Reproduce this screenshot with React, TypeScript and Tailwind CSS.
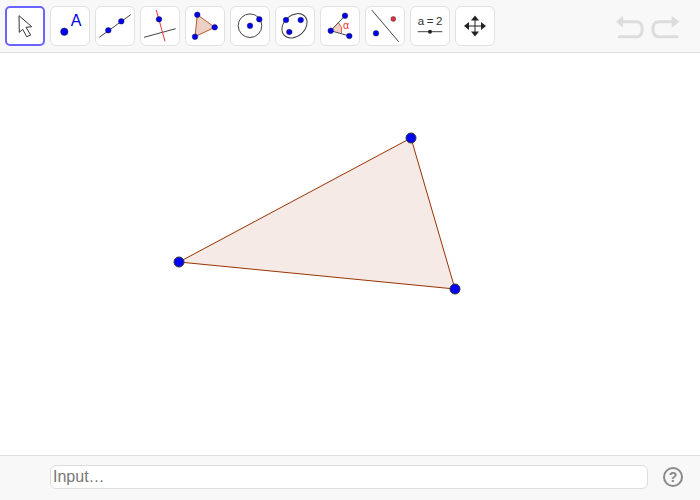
import React from "react";

const BLUE = "#0000f0";
const Dot = ({ x, y, r = 2.8, c = BLUE }: { x: number; y: number; r?: number; c?: string }) => (
  <circle cx={x} cy={y} r={r} fill={c} stroke="#222244" strokeWidth={0.5} />
);

const Tool = ({ active, label, children }: { active?: boolean; label: string; children: React.ReactNode }) => (
  <button
    aria-label={label}
    className={
      active
        ? "w-10 h-10 shrink-0 flex items-center justify-center rounded-[5px] bg-white border-2 border-[#6b63ff]"
        : "w-10 h-10 shrink-0 flex items-center justify-center rounded-[6px] bg-white border border-[#e2e2e2]"
    }
  >
    <svg width="40" height="40" viewBox="0 0 40 40" className="shrink-0">
      {children}
    </svg>
  </button>
);

const LINE = "#444444";

export default function App() {
  return (
    <div className="w-[700px] h-[500px] flex flex-col bg-white overflow-hidden font-['Liberation_Sans',Arial,sans-serif]">
      <div className="h-[53px] shrink-0 flex items-start pt-[6px] pl-[5px] gap-[5px] bg-[#f8f8f8] border-b border-[#dfdfdf]">
        <Tool active label="Move">
          <polygon
            points="14,9.7 26.7,20.7 21,21.3 25.7,29 21.7,30.7 17.7,23.3 14.3,26.3"
            fill="#ffffff"
            stroke="#333333"
            strokeWidth="1"
            strokeLinejoin="round"
          />
        </Tool>
        <Tool label="Point">
          <Dot x={14.3} y={25.7} r={3.7} />
          <text x="26" y="20" textAnchor="middle" fontSize="16" fill="#0000e6" fontFamily="Liberation Sans, sans-serif">A</text>
        </Tool>
        <Tool label="Line">
          <line x1="4.3" y1="31.3" x2="35.7" y2="8.7" stroke={LINE} strokeWidth="1" />
          <Dot x={13.3} y={24.3} />
          <Dot x={26.3} y={15.3} />
        </Tool>
        <Tool label="Perpendicular">
          <line x1="4" y1="31.3" x2="35.7" y2="22.7" stroke={LINE} strokeWidth="1" />
          <line x1="16.3" y1="4" x2="25" y2="35.3" stroke="#f03030" strokeWidth="1" />
          <Dot x={19} y={13.3} />
        </Tool>
        <Tool label="Polygon">
          <polygon points="12.3,8.7 29.7,21.3 10,30.7" fill="#ebd0c5" stroke="#b5582f" strokeWidth="1" />
          <Dot x={12.3} y={8.7} />
          <Dot x={29.7} y={21.3} />
          <Dot x={10} y={30.7} />
        </Tool>
        <Tool label="Circle">
          <circle cx="20" cy="19.7" r="11.8" fill="none" stroke={LINE} strokeWidth="1" />
          <Dot x={20} y={19.7} />
          <Dot x={29.3} y={13.3} />
        </Tool>
        <Tool label="Conic">
          <ellipse cx="19.5" cy="19.8" rx="14" ry="10.5" transform="rotate(-42 19.5 19.8)" fill="none" stroke={LINE} strokeWidth="1" />
          <Dot x={11} y={14} />
          <Dot x={25.7} y={14} />
          <Dot x={14.3} y={26} />
        </Tool>
        <Tool label="Angle">
          <path d="M10.7 24.7 L18.4 16.6 A11 11 0 0 1 21.5 27 Z" fill="#f3cfc6" stroke="none" />
          <path d="M18.4 16.6 A11 11 0 0 1 21.5 27" fill="none" stroke="#c04a2a" strokeWidth="0.8" />
          <line x1="10.7" y1="24.7" x2="25" y2="9.7" stroke={LINE} strokeWidth="1" />
          <line x1="10.7" y1="24.7" x2="29.3" y2="30" stroke={LINE} strokeWidth="1" />
          <Dot x={10.7} y={24.7} />
          <Dot x={25} y={9.7} />
          <Dot x={29.3} y={30} />
          <text x="26" y="23" textAnchor="middle" fontSize="10.5" fill="#ff3030" fontFamily="Liberation Sans, sans-serif">α</text>
        </Tool>
        <Tool label="Reflect">
          <line x1="6.7" y1="4" x2="33.7" y2="35.7" stroke={LINE} strokeWidth="1" />
          <Dot x={11} y={27.3} />
          <Dot x={28.3} y={13} c="#e83030" r={2.4} />
        </Tool>
        <Tool label="Slider">
          <text x="20" y="19" textAnchor="middle" fontSize="11.5" letterSpacing="-0.3" fill="#333333" fontFamily="Liberation Sans, sans-serif">a = 2</text>
          <line x1="7.7" y1="25.7" x2="32.3" y2="25.7" stroke={LINE} strokeWidth="1" />
          <circle cx="20" cy="25.7" r="2" fill="#222222" />
        </Tool>
        <Tool label="Move view">
          <line x1="20" y1="11" x2="20" y2="29" stroke="#222222" strokeWidth="1" />
          <line x1="11" y1="20" x2="29" y2="20" stroke="#222222" strokeWidth="1" />
          <polygon points="20,9.5 16,14.5 24,14.5" fill="#222222" />
          <polygon points="20,30.5 16,25.5 24,25.5" fill="#222222" />
          <polygon points="9,20 14,16 14,24" fill="#222222" />
          <polygon points="31,20 26,16 26,24" fill="#222222" />
        </Tool>
        <div className="ml-auto mr-[20px] flex gap-[6px] mt-[7px]">
          <svg width="30" height="26" viewBox="0 0 30 26" aria-label="Undo">
            <polygon points="2,8.7 9,2.7 9,14.7" fill="#dcdcdc" />
            <path d="M8 8.7 H23 C30 8.7 30 23.7 23 23.7 H4" fill="none" stroke="#dcdcdc" strokeWidth="3" />
          </svg>
          <svg width="30" height="26" viewBox="0 0 30 26" aria-label="Redo">
            <polygon points="29.3,8.7 21.7,2.7 21.7,14.7" fill="#dcdcdc" />
            <path d="M23 8.7 H8.3 C1 8.7 1 23.7 8.3 23.7 H28.3" fill="none" stroke="#dcdcdc" strokeWidth="3" />
          </svg>
        </div>
      </div>

      <div className="flex-1 min-h-0 bg-white">
        <svg width="700" height="402" viewBox="0 53 700 402" className="block">
          <polygon points="411,138 179,262 455,289" fill="#993300" fillOpacity="0.1" stroke="#993300" strokeWidth="1" />
          <circle cx="411" cy="138" r="5" fill="#0000ff" stroke="#333333" strokeWidth="1" />
          <circle cx="179" cy="262" r="5" fill="#0000ff" stroke="#333333" strokeWidth="1" />
          <circle cx="455" cy="289" r="5" fill="#0000ff" stroke="#333333" strokeWidth="1" />
        </svg>
      </div>

      <div className="h-[45px] shrink-0 flex items-start pt-[9px] pl-[50px] bg-[#f8f8f8] border-t border-[#dfdfdf]">
        <input
          placeholder="Input…"
          className="w-[598px] h-6 px-[2px] text-base bg-white border border-[#dddddd] rounded-md outline-none placeholder:text-[#777777]"
        />
        <svg width="22" height="22" viewBox="0 0 22 22" className="ml-[14px] mt-[1px]" aria-label="Help">
          <circle cx="11" cy="11" r="9" fill="none" stroke="#8a8a8a" strokeWidth="2" />
          <text x="11" y="16" textAnchor="middle" fontSize="14" fontWeight="700" fill="#8a8a8a" fontFamily="Liberation Sans, sans-serif">?</text>
        </svg>
      </div>
    </div>
  );
}
